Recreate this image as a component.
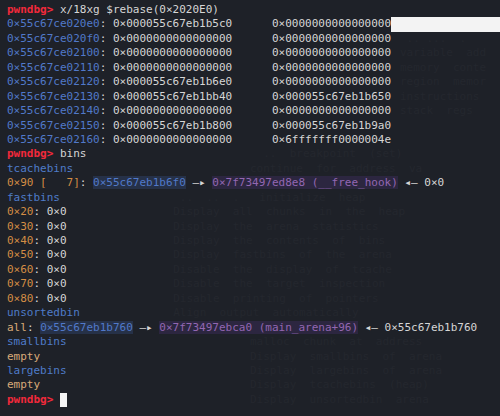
import React from "react";

const W = "text-[#d6d6d6]";
const R = "text-[#f2293b] font-bold";
const B = "text-[#5179c9]";
const O = "text-[#d38d45]";
const P = "text-[#9367b2] bg-[#2c2640]";
const H = "text-[#5179c9] bg-[#263148]";
const T = "text-[#d8aa78]";
const L = "text-[#4f7cc9]";

const mem = [
  ["0×55c67ce020e0", "0×000055c67eb1b5c0", "0×0000000000000000"],
  ["0×55c67ce020f0", "0×0000000000000000", "0×0000000000000000"],
  ["0×55c67ce02100", "0×0000000000000000", "0×0000000000000000"],
  ["0×55c67ce02110", "0×0000000000000000", "0×0000000000000000"],
  ["0×55c67ce02120", "0×000055c67eb1b6e0", "0×0000000000000000"],
  ["0×55c67ce02130", "0×000055c67eb1bb40", "0×000055c67eb1b650"],
  ["0×55c67ce02140", "0×0000000000000000", "0×0000000000000000"],
  ["0×55c67ce02150", "0×000055c67eb1b800", "0×000055c67eb1b9a0"],
  ["0×55c67ce02160", "0×0000000000000000", "0×6fffffff0000004e"],
];

const ghost = [
  ["", ""],
  ["", ""],
  ["pl-[400px]", " .. ...  ."],
  ["pl-[400px]", "variable  add"],
  ["pl-[400px]", "memory  conte"],
  ["pl-[400px]", "region  memor"],
  ["pl-[400px]", "instructions"],
  ["pl-[400px]", "stack  regs"],
  ["", ""],
  ["", ""],
  ["pl-[250px]", "  ..  breakpoint  (set)"],
  ["pl-[250px]", "continue  for  address  va"],
  ["", ""],
  ["pl-[160px]", "   ..  ..  .   initialize  heap"],
  ["pl-[160px]", "  Display  all  chunks  in  the  heap"],
  ["pl-[160px]", "  Display  the  arena  statistics"],
  ["pl-[160px]", "  Display  the  contents  of  bins"],
  ["pl-[160px]", "  Display  fastbins  of  the  arena"],
  ["pl-[160px]", "  Disable  the  display  of  tcache"],
  ["pl-[160px]", "  Disable  the  target  inspection"],
  ["pl-[160px]", "  Disable  printing  of  pointers"],
  ["pl-[160px]", "  Align  output  automatically"],
  ["", ""],
  ["pl-[250px]", "malloc  chunk  at  address"],
  ["pl-[250px]", "Display  smallbins  of  arena"],
  ["pl-[250px]", "Display  largebins  of  arena"],
  ["pl-[250px]", "Display  tcachebins  (heap)"],
  ["pl-[250px]", "Display  unsortedbin  arena"],
];

function Line({ children }) {
  return <div className="h-[14.44px] whitespace-pre">{children}</div>;
}

export default function App() {
  return (
    <div className="relative w-[500px] h-[416px] overflow-hidden bg-[#1e2128] font-['DejaVu_Sans_Mono',monospace] text-[11px] leading-[14.44px]">
      <div className="absolute inset-0 pt-[3px] text-[#24272e] text-[11px] leading-[14.44px]">
        {ghost.map((g, i) => (
          <div key={i} className={"h-[14.44px] whitespace-pre " + g[0]}>
            {g[1]}
          </div>
        ))}
      </div>
      <div className="relative pt-[3px] pl-[7px]">
        <Line>
          <span className={R}>pwndbg&gt;</span>
          <span className={W}> x/18xg $rebase(0×2020E0)</span>
        </Line>
        {mem.map((m, i) => (
          <Line key={i}>
            <span className={B}>{m[0]}</span>
            <span className={W}>{": " + m[1] + "      " + m[2]}</span>
            {i === 0 && (
              <span className="inline-block align-top w-[120px] h-[14.44px] bg-[#f3f3f3]" />
            )}
          </Line>
        ))}
        <Line>
          <span className={R}>pwndbg&gt;</span>
          <span className={W}> bins</span>
        </Line>
        <Line>
          <span className={L}>tcachebins</span>
        </Line>
        <Line>
          <span className={O}>0×90 [   7]</span>
          <span className={W}>: </span>
          <span className={H}>0×55c67eb1b6f0</span>
          <span className={W}> —▸ </span>
          <span className={P}>0×7f73497ed8e8 (__free_hook)</span>
          <span className={W}> ◂— 0×0</span>
        </Line>
        <Line>
          <span className={L}>fastbins</span>
        </Line>
        {["20", "30", "40", "50", "60", "70", "80"].map((s) => (
          <Line key={s}>
            <span className={O}>{"0×" + s}</span>
            <span className={W}>: 0×0</span>
          </Line>
        ))}
        <Line>
          <span className={L}>unsortedbin</span>
        </Line>
        <Line>
          <span className={T}>all</span>
          <span className={W}>: </span>
          <span className={H}>0×55c67eb1b760</span>
          <span className={W}> —▸ </span>
          <span className={P}>0×7f73497ebca0 (main_arena+96)</span>
          <span className={W}> ◂— 0×55c67eb1b760</span>
        </Line>
        <Line>
          <span className={L}>smallbins</span>
        </Line>
        <Line>
          <span className={T}>empty</span>
        </Line>
        <Line>
          <span className={L}>largebins</span>
        </Line>
        <Line>
          <span className={T}>empty</span>
        </Line>
        <Line>
          <span className={R}>pwndbg&gt;</span>
          <span className={W}> </span>
          <span className="inline-block align-top w-[7px] h-[14px] bg-[#f5f5f5]" />
        </Line>
      </div>
    </div>
  );
}
